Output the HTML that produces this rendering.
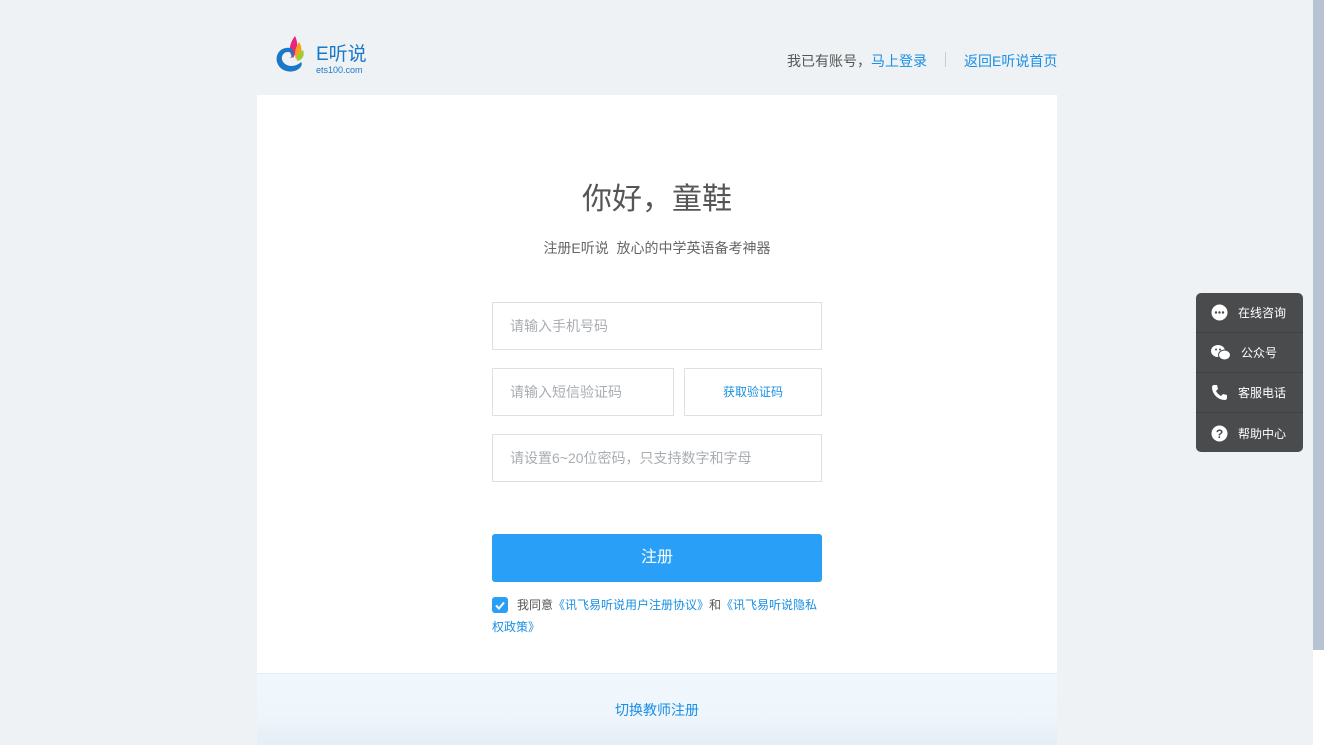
<!DOCTYPE html>
<html><head><meta charset="utf-8"><style>
*{margin:0;padding:0;box-sizing:border-box}
body{width:1324px;height:745px;overflow:hidden;background:#eff2f5;font-family:"Liberation Sans","Noto Sans CJK SC",sans-serif;position:relative}
.abs{position:absolute}
a{color:#1a8fe3;text-decoration:none}
.inp{position:absolute;border:1px solid #dcdfe3;background:#fff;height:48px;font-size:14px;color:#a9adb2;line-height:46px;padding-left:17px}
.side{position:absolute;left:1196px;top:293px;width:107px;height:159px;background:#4a4b4d;border-radius:5px;color:#fff;font-size:12px}
.side div{height:40px;border-bottom:1px solid #3f4042;display:flex;align-items:center;padding-left:15px}
.side div:last-child{border:none}
.side svg{margin-right:10px}
</style></head><body>
<div class="abs" style="left:1313px;top:0;width:11px;height:650px;background:#b7c2d3"></div>
<div class="abs" style="left:1313px;top:650px;width:11px;height:95px;background:#fff"></div>

<!-- logo -->
<svg class="abs" style="left:275px;top:34px" width="40" height="42" viewBox="0 0 40 42">
<path d="M20 2 C14 10 13 18 18 24 C22 18 24 10 20 2Z" fill="#e8257b"/>
<path d="M24 8 C20 14 19 20 21 25 C27 21 28 14 24 8Z" fill="#f5a11c"/>
<path d="M28 16 C23 19 21 23 22 27 C28 26 30 21 28 16Z" fill="#a3c93a"/>
<path d="M16 14 C6 12 0 20 2 28 C4 36 14 40 22 36 C26 34 28 30 26 28 C22 32 14 34 9 29 C5 25 7 18 13 18 C17 18 18 22 15 24 C19 24 20 18 16 14Z" fill="#1b78c9"/>
</svg>
<div class="abs" style="left:316px;top:44px;font-size:19px;color:#1b78c9;line-height:22px">E听说</div>
<div class="abs" style="left:316px;top:65px;font-size:9px;color:#1b78c9">ets100.com</div>

<div class="abs" style="left:787px;top:51px;font-size:14px;color:#555">我已有账号，<a>马上登录</a></div>
<div class="abs" style="left:945px;top:52px;width:1px;height:15px;background:#ccc"></div>
<div class="abs" style="left:964px;top:51px;font-size:14px"><a>返回E听说首页</a></div>

<div class="abs" style="left:257px;top:95px;width:800px;height:578px;background:#fff"></div>
<div class="abs" style="left:257px;top:673px;width:800px;height:72px;background:linear-gradient(#f0f8fd,#eef5fb 60%,#e5edf5);border-top:1px solid #e3eef6"></div>
<div class="abs" style="left:257px;top:700px;width:800px;text-align:center;font-size:14px"><a>切换教师注册</a></div>

<div class="abs" style="left:257px;top:174px;width:800px;text-align:center;font-size:30px;color:#555">你好，童鞋</div>
<div class="abs" style="left:257px;top:238px;width:800px;text-align:center;font-size:14px;color:#666">注册E听说&nbsp;&nbsp;放心的中学英语备考神器</div>

<div class="inp" style="left:492px;top:302px;width:330px">请输入手机号码</div>
<div class="inp" style="left:492px;top:368px;width:182px">请输入短信验证码</div>
<div class="inp" style="left:684px;top:368px;width:138px;padding:0;text-align:center;font-size:12px;color:#1a8fe3">获取验证码</div>
<div class="inp" style="left:492px;top:434px;width:330px">请设置6~20位密码，只支持数字和字母</div>

<div class="abs" style="left:492px;top:534px;width:330px;height:48px;background:#2a9ff8;border-radius:3px;color:#fff;font-size:16px;text-align:center;line-height:48px">注册</div>

<div class="abs" style="left:492px;top:597px;width:16px;height:16px;background:#2a9ff8;border-radius:3px"><svg width="16" height="16"><path d="M4 8.5l3 3 5-6" stroke="#fff" stroke-width="2" fill="none"/></svg></div>
<div class="abs" style="left:492px;top:597px;width:332px;font-size:12px;line-height:22px;color:#555;text-indent:25px;margin-top:-3px">我同意<a>《讯飞易听说用户注册协议》</a>和<a>《讯飞易听说隐私权政策》</a></div>

<div class="side">
<div><svg width="17" height="17"><circle cx="8.5" cy="8.5" r="8" fill="#fff"/><circle cx="5" cy="8.5" r="1.2" fill="#4a4b4d"/><circle cx="8.5" cy="8.5" r="1.2" fill="#4a4b4d"/><circle cx="12" cy="8.5" r="1.2" fill="#4a4b4d"/></svg>在线咨询</div>
<div><svg width="20" height="17"><ellipse cx="7" cy="7" rx="7" ry="6" fill="#fff"/><ellipse cx="13.5" cy="11" rx="6" ry="5" fill="#fff" stroke="#4a4b4d"/><circle cx="5" cy="5.5" r="1" fill="#4a4b4d"/><circle cx="9" cy="5.5" r="1" fill="#4a4b4d"/></svg>公众号</div>
<div><svg width="17" height="17"><path d="M3 1l3 0 1 4-2 2c1 2 3 4 5 5l2-2 4 1v3c0 1-1 2-2 2C7 16 1 10 1 3c0-1 1-2 2-2z" fill="#fff"/></svg>客服电话</div>
<div><svg width="17" height="17"><circle cx="8.5" cy="8.5" r="8" fill="#fff"/><text x="8.5" y="13" font-size="12" font-weight="bold" text-anchor="middle" fill="#4a4b4d" font-family="Liberation Sans">?</text></svg>帮助中心</div>
</div>
</body></html>
